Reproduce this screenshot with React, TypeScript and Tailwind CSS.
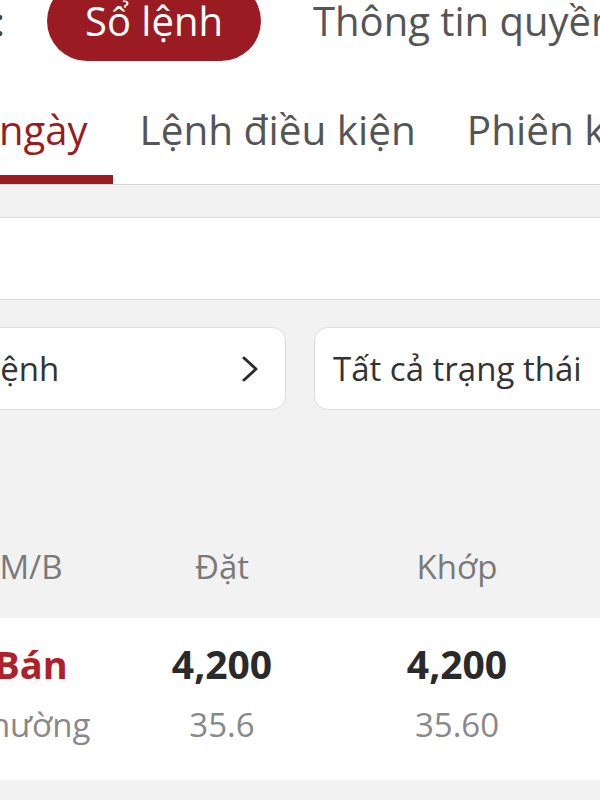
import React from "react";

const font = { fontFamily: '"Open Sans", "Noto Sans", sans-serif' };

function Chevron() {
  return (
    <svg width="18" height="26" viewBox="0 0 18 26" fill="none">
      <polyline points="3,2 15,13 3,24" stroke="#2b2b2b" strokeWidth="3" strokeLinecap="round" strokeLinejoin="round" />
    </svg>
  );
}

export default function App() {
  return (
    <div className="w-[600px] h-[800px] overflow-hidden bg-[#f2f2f2]" style={font}>
      {/* top header + tabs */}
      <div className="bg-white">
        <div className="flex items-center h-[80px] mt-[-19px] whitespace-nowrap">
          <span className="text-[38px] leading-[48px] text-[#444] ml-[-5px] w-[10px] shrink-0 overflow-hidden">:</span>
          <div className="ml-[42px] h-[80px] w-[214px] shrink-0 rounded-full bg-[#9b1b22] flex items-center justify-center text-white text-[40px]">
            Sổ lệnh
          </div>
          <span className="ml-[52px] text-[40px] text-[#555]">Thông tin quyền</span>
        </div>
        <div className="flex items-end h-[124px] whitespace-nowrap border-b border-[#d6d6d6]">
          <div className="ml-[-9px] shrink-0 flex flex-col items-stretch">
            <span className="text-[40px] text-[#9b1b22] pl-[8px] pr-[25px] leading-[52px] mb-[19px]">ngày</span>
            <div className="h-[9px] bg-[#9b1b22]" />
          </div>
          <span className="ml-[27px] shrink-0 text-[40.5px] text-[#555] leading-[52px] mb-[28px]">Lệnh điều kiện</span>
          <span className="ml-[51px] shrink-0 text-[40.5px] text-[#555] leading-[52px] mb-[28px]">Phiên khớp</span>
        </div>
      </div>

      {/* filter bands */}
      <div className="h-[33px] border-b border-[#dcdcdc]" />
      <div className="h-[82px] bg-white border-b border-[#dcdcdc]" />

      <div className="flex gap-[28px] mt-[27px] whitespace-nowrap">
        <div className="ml-[-40px] shrink-0 w-[326px] h-[83px] bg-white border border-[#dedede] rounded-[14px] flex items-center justify-between pl-[22px] pr-[26px]">
          <span className="text-[33px] text-[#333]">Lệnh</span>
          <Chevron />
        </div>
        <div className="shrink-0 w-[320px] h-[83px] bg-white border border-[#dedede] rounded-[14px] flex items-center pl-[18px]">
          <span className="text-[33px] text-[#333]">Tất cả trạng thái</span>
        </div>
      </div>

      {/* table header */}
      <div className="flex h-[208px] items-end pb-[29px] text-[33px] leading-[44px] text-[#7a7a7a] whitespace-nowrap">
        <div className="ml-[-39px] shrink-0 w-[140px] text-center">M/B</div>
        <div className="ml-[2px] shrink-0 w-[238px] text-center">Đặt</div>
        <div className="shrink-0 w-[232px] text-center">Khớp</div>
      </div>

      {/* row */}
      <div className="bg-white h-[162px] flex whitespace-nowrap pt-[18px]">
        <div className="ml-[-39px] shrink-0 w-[140px] flex flex-col items-center">
          <span className="text-[38px] font-bold text-[#b0202a] leading-[56px]">Bán</span>
          <span className="text-[33px] text-[#888] leading-[66px]">Thường</span>
        </div>
        <div className="ml-[2px] shrink-0 w-[238px] flex flex-col items-center">
          <span className="text-[39px] font-bold text-[#2a2a2a] leading-[56px]">4,200</span>
          <span className="text-[33px] text-[#888] leading-[66px]">35.6</span>
        </div>
        <div className="shrink-0 w-[232px] flex flex-col items-center">
          <span className="text-[39px] font-bold text-[#2a2a2a] leading-[56px]">4,200</span>
          <span className="text-[33px] text-[#888] leading-[66px]">35.60</span>
        </div>
      </div>
    </div>
  );
}
